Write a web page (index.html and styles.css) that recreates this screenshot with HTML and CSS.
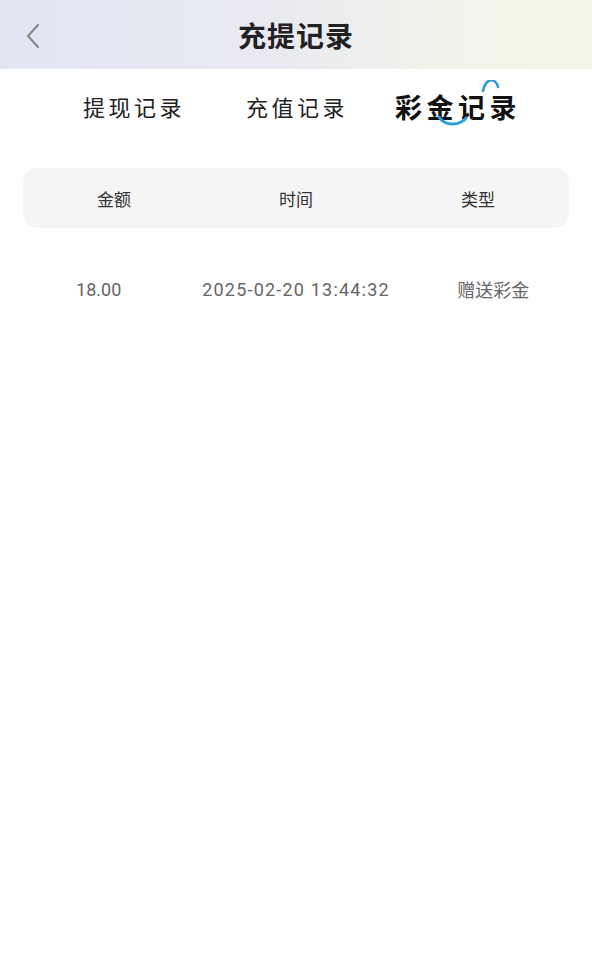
FILE: index.html
```html
<!DOCTYPE html>
<html>
  <head>
    <title>充提记录</title>
    <meta charset="utf-8">
    <link rel="stylesheet" href="styles.css">
  </head>
  <body>
    <!-- (A) TOP BAR -->
    <header class="topbar">
      <a class="back" href="#">
        <svg width="16" height="26" viewBox="0 0 16 26"><path d="M13 2 L3 13 L13 24" fill="none" stroke="#8a8a8a" stroke-width="2.2" stroke-linecap="round" stroke-linejoin="round"/></svg>
      </a>
      <h1 class="title">充提记录</h1>
    </header>

    <!-- (B) TABS -->
    <nav class="tabs">
      <span class="tab">提现记录</span>
      <span class="tab">充值记录</span>
      <span class="tab active">彩金记录
        <svg class="swoosh" width="80" height="50" viewBox="0 0 80 50">
          <path d="M2 37 C6 44 16 46 24 42 C26 41 28 40 29 38" fill="none" stroke="#2d9fd6" stroke-width="3" stroke-linecap="round"/>
          <path d="M46 11 C47 5 50 1 54 0 C57 0 60 3 61 7" fill="none" stroke="#2d9fd6" stroke-width="2.6" stroke-linecap="round"/>
        </svg>
      </span>
    </nav>

    <!-- (C) TABLE -->
    <div class="thead">
      <span>金额</span>
      <span>时间</span>
      <span>类型</span>
    </div>
    <div class="row">
      <span>18.00</span>
      <span class="time">2025-02-20 13:44:32</span>
      <span>赠送彩金</span>
    </div>
  </body>
</html>
```

FILE: styles.css
```css
* { box-sizing: border-box; }
body {
  margin: 0;
  background: #fff;
  font-family: "Noto Sans CJK SC", "Noto Sans", sans-serif;
}
.topbar {
  height: 69px;
  display: flex;
  align-items: center;
  justify-content: center;
  position: relative;
  background: linear-gradient(90deg, #e3e5f3 0%, #e9eaf1 45%, #f2f4e9 80%, #f3f5e6 100%);
}
.back {
  position: absolute;
  left: 25px;
  top: 23px;
}
.title {
  margin: 0;
  font-size: 28px;
  font-weight: 700;
  color: #222;
  letter-spacing: 1px;
}
.tabs {
  height: 78px;
  display: flex;
  align-items: center;
  padding: 0 0 4px 83px;
}
.tab {
  font-size: 22px;
  letter-spacing: 3.5px;
  color: #222;
  margin-right: 61px;
  position: relative;
}
.tab.active {
  font-size: 27px;
  font-weight: 700;
  letter-spacing: 4.5px;
  color: #111;
  margin-right: 0;
  margin-left: -14px;
}
.swoosh {
  position: absolute;
  left: 42px;
  top: -7px;
}
.thead {
  margin: 21px 23px 0;
  height: 60px;
  border-radius: 14px;
  background: #f5f5f5;
  display: grid;
  grid-template-columns: 1fr 1fr 1fr;
  align-items: center;
  text-align: center;
  font-size: 17px;
  color: #333;
}
.row {
  height: 122px;
  display: grid;
  grid-template-columns: 1fr 1fr 1fr;
  align-items: center;
  text-align: center;
  font-family: Roboto, "Noto Sans CJK SC", sans-serif;
  font-size: 18px;
  color: #666;
}
.time { letter-spacing: 1.2px; }
```
